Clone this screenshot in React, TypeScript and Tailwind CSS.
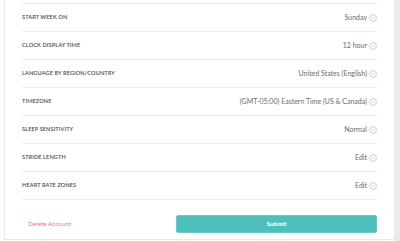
import React from "react";

const rows: [string, string][] = [
  ["START WEEK ON", "Sunday"],
  ["CLOCK DISPLAY TIME", "12 hour"],
  ["LANGUAGE BY REGION/COUNTRY", "United States (English)"],
  ["TIMEZONE", "(GMT-05:00) Eastern Time (US & Canada)"],
  ["SLEEP SENSITIVITY", "Normal"],
  ["STRIDE LENGTH", "Edit"],
  ["HEART RATE ZONES", "Edit"],
];

function ChevronCircle() {
  return (
    <svg width="8" height="8" viewBox="0 0 8 8" className="shrink-0">
      <circle cx="4" cy="4" r="3.4" fill="none" stroke="#b8b8b8" strokeWidth="0.7" />
      <path d="M2.6 3.5 L4 4.7 L5.4 3.5" fill="none" stroke="#b8b8b8" strokeWidth="0.7" />
    </svg>
  );
}

export default function App() {
  return (
    <div
      className="w-[400px] h-[241px] bg-white flex overflow-hidden"
      style={{ fontFamily: "Lato, 'Open Sans', sans-serif" }}
    >
      <div className="w-[4px] shrink-0" />
      <div className="w-[390px] h-[240px] shrink-0 border-l border-b border-[#e9e9e9] pl-[17px] pr-[17px] flex flex-col">
        <div className="h-[4px] border-b border-[#eeeeee]" />
        {rows.map(([label, value]) => (
          <div
            key={label}
            className="h-[28px] border-b border-[#eeeeee] flex items-center justify-between"
          >
            <span className="text-[5.6px] font-semibold tracking-[0.1px] text-[#4a4a4a]">{label}</span>
            <span className="flex items-center gap-[2px] text-[7px] text-[#6b6b6b]">
              {value}
              <ChevronCircle />
            </span>
          </div>
        ))}
        <div className="flex-1 flex items-start justify-between pl-[6px] pt-[15px]">
          <span className="h-[18px] flex items-center text-[6.4px] text-[#f3739a]">Delete Account</span>
          <button className="w-[201px] h-[18px] rounded-[2px] bg-[#4dbfbc] border border-[#66ccc9] text-white text-[6.4px] font-bold">
            Submit
          </button>
        </div>
      </div>
      <div className="flex-1 bg-[#ebebeb]" />
    </div>
  );
}
